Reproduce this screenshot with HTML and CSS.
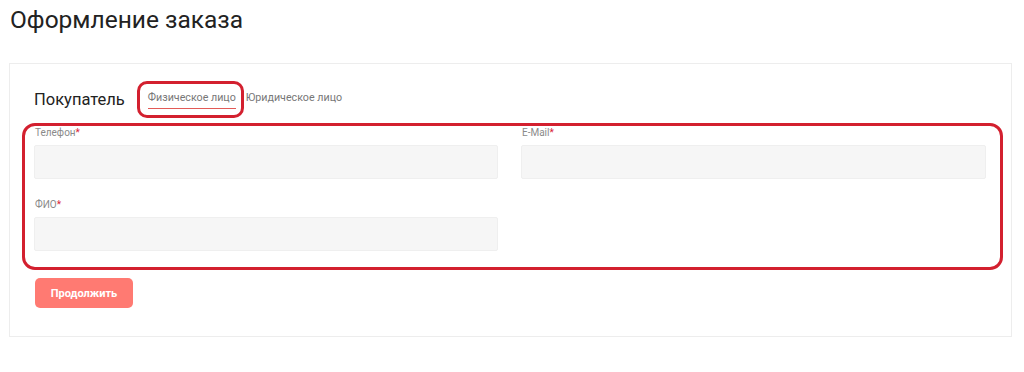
FILE: index.html
```html
<!DOCTYPE html>
<html lang="ru">
<head>
  <meta charset="UTF-8">
  <title>Оформление заказа</title>
  <link rel="stylesheet" href="styles.css">
</head>
<body>
  <div class="page">
    <h1 class="page-title">Оформление заказа</h1>

    <div class="order-card">
      <div class="buyer-head">
        <span class="buyer-title">Покупатель</span>
        <div class="buyer-tabs">
          <a class="tab active">Физическое лицо</a>
          <a class="tab">Юридическое лицо</a>
        </div>
      </div>

      <div class="fields">
        <div class="field">
          <label>Телефон<span class="req">*</span></label>
          <input type="text">
        </div>
        <div class="field">
          <label>E-Mail<span class="req">*</span></label>
          <input type="text">
        </div>
        <div class="field">
          <label>ФИО<span class="req">*</span></label>
          <input type="text">
        </div>
      </div>

      <button class="btn-next">Продолжить</button>
    </div>

    <!-- пометки поверх скриншота -->
    <div class="mark mark-tab"></div>
    <div class="mark mark-fields"></div>
  </div>
</body>
</html>
```

FILE: styles.css
```css
* { margin: 0; padding: 0; box-sizing: border-box; }
body {
  background: #fff;
  color: #222;
  font-family: Roboto, "Noto Sans", sans-serif;
}
.page { position: relative; padding: 0 12px 0 9px; }
.page-title {
  font-size: 24.5px;
  font-weight: 400;
  line-height: 28px;
  padding: 6px 0 0 1px;
  margin-bottom: 29px;
  color: #222;
}
.order-card {
  border: 1px solid #ededed;
  padding: 25px 25px 28px 24px;
  height: 274px;
}
.buyer-head { display: flex; align-items: center; height: 20px; }
.buyer-title { font-size: 16.5px; color: #222; margin-right: 23px; }
.buyer-tabs { display: flex; gap: 10px; }
.tab {
  font-size: 10.7px;
  color: #777;
  padding-bottom: 3px;
  border-bottom: 1px solid transparent;
  line-height: 14px;
  margin-top: 2px;
}
.tab.active { border-bottom-color: #e25a56; }
.fields {
  display: grid;
  grid-template-columns: 464px 465px;
  column-gap: 23px;
  row-gap: 19px;
  margin-top: 17px;
}
.field label {
  display: block;
  font-size: 10px;
  line-height: 14px;
  color: #8a8a8a;
  margin-bottom: 5px;
  padding-left: 1px;
}
.req { color: #d9263a; }
.field input {
  display: block;
  width: 100%;
  height: 34px;
  background: #f6f6f6;
  border: 1px solid #efefef;
  border-radius: 2px;
  outline: none;
}
.btn-next {
  margin-top: 27px;
  margin-left: 1px;
  width: 98px;
  height: 30px;
  border: none;
  border-radius: 5px;
  background: #ff7a72;
  color: #fff;
  font-family: Roboto, sans-serif;
  font-size: 11px;
  font-weight: 700;
  cursor: pointer;
}
.mark {
  position: absolute;
  border: 3px solid #d3202f;
}
.mark-tab { left: 137px; top: 81px; width: 107px; height: 37px; border-radius: 10px; }
.mark-fields { left: 22px; top: 123px; width: 981px; height: 147px; border-radius: 13px; }
```
